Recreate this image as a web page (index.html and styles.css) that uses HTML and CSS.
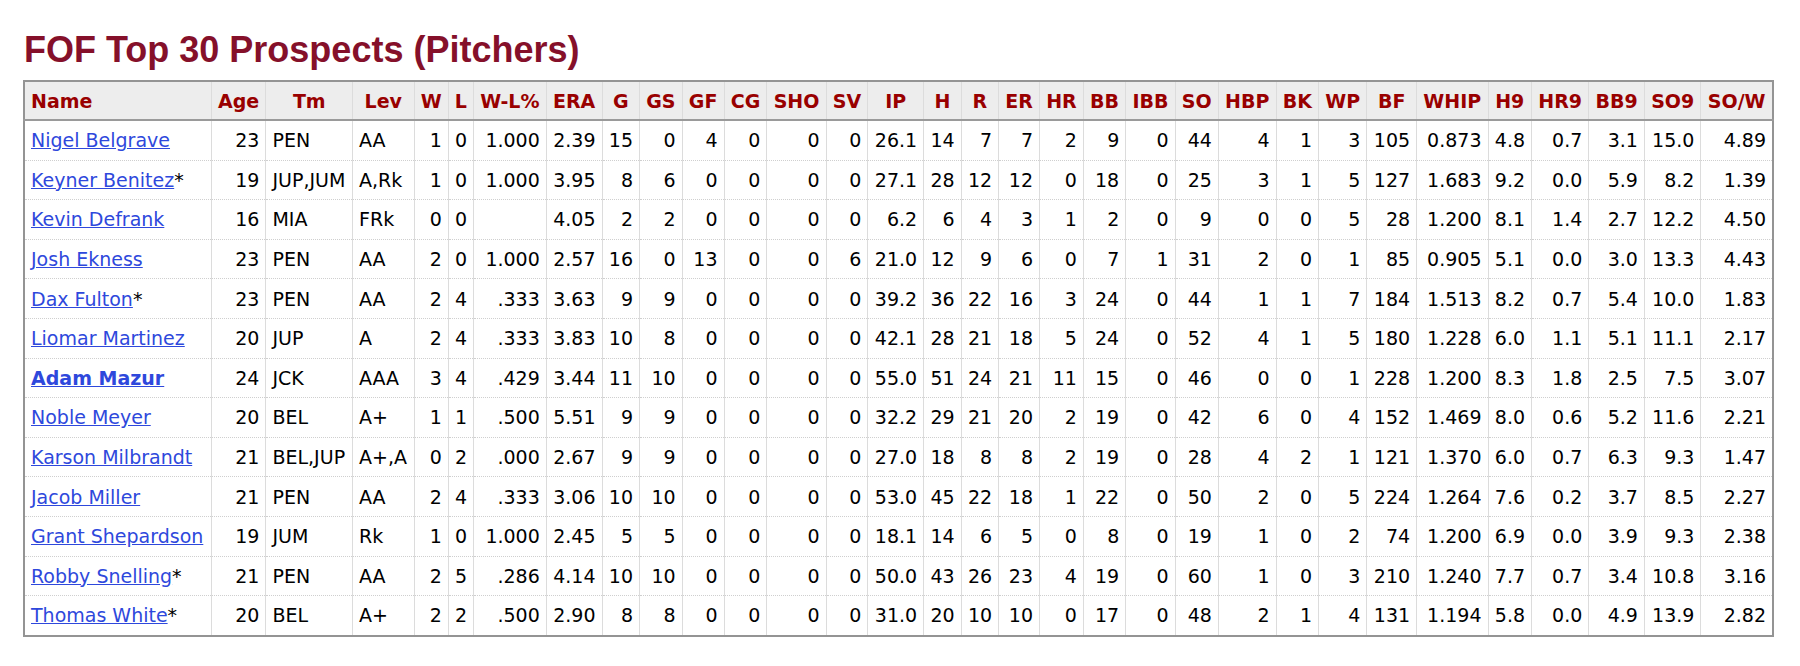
FILE: index.html
```html
<!DOCTYPE html>
<html>
<head>
<meta charset="utf-8">
<link rel="stylesheet" href="styles.css">
</head>
<body>
<h1 class="title">FOF Top 30 Prospects (Pitchers)</h1>
<table class="stats">
<thead>
<tr>
<th class="name">Name</th><th>Age</th><th>Tm</th><th>Lev</th><th>W</th><th>L</th><th>W-L%</th><th>ERA</th><th>G</th><th>GS</th><th>GF</th><th>CG</th><th>SHO</th><th>SV</th><th>IP</th><th>H</th><th>R</th><th>ER</th><th>HR</th><th>BB</th><th>IBB</th><th>SO</th><th>HBP</th><th>BK</th><th>WP</th><th>BF</th><th>WHIP</th><th>H9</th><th>HR9</th><th>BB9</th><th>SO9</th><th>SO/W</th>
</tr>
</thead>
<tbody>
<tr><td class="name"><a href="#">Nigel Belgrave</a></td><td>23</td><td class="l">PEN</td><td class="l">AA</td><td>1</td><td>0</td><td>1.000</td><td>2.39</td><td>15</td><td>0</td><td>4</td><td>0</td><td>0</td><td>0</td><td>26.1</td><td>14</td><td>7</td><td>7</td><td>2</td><td>9</td><td>0</td><td>44</td><td>4</td><td>1</td><td>3</td><td>105</td><td>0.873</td><td>4.8</td><td>0.7</td><td>3.1</td><td>15.0</td><td>4.89</td></tr>
<tr><td class="name"><a href="#">Keyner Benitez</a>*</td><td>19</td><td class="l">JUP,JUM</td><td class="l">A,Rk</td><td>1</td><td>0</td><td>1.000</td><td>3.95</td><td>8</td><td>6</td><td>0</td><td>0</td><td>0</td><td>0</td><td>27.1</td><td>28</td><td>12</td><td>12</td><td>0</td><td>18</td><td>0</td><td>25</td><td>3</td><td>1</td><td>5</td><td>127</td><td>1.683</td><td>9.2</td><td>0.0</td><td>5.9</td><td>8.2</td><td>1.39</td></tr>
<tr><td class="name"><a href="#">Kevin Defrank</a></td><td>16</td><td class="l">MIA</td><td class="l">FRk</td><td>0</td><td>0</td><td></td><td>4.05</td><td>2</td><td>2</td><td>0</td><td>0</td><td>0</td><td>0</td><td>6.2</td><td>6</td><td>4</td><td>3</td><td>1</td><td>2</td><td>0</td><td>9</td><td>0</td><td>0</td><td>5</td><td>28</td><td>1.200</td><td>8.1</td><td>1.4</td><td>2.7</td><td>12.2</td><td>4.50</td></tr>
<tr><td class="name"><a href="#">Josh Ekness</a></td><td>23</td><td class="l">PEN</td><td class="l">AA</td><td>2</td><td>0</td><td>1.000</td><td>2.57</td><td>16</td><td>0</td><td>13</td><td>0</td><td>0</td><td>6</td><td>21.0</td><td>12</td><td>9</td><td>6</td><td>0</td><td>7</td><td>1</td><td>31</td><td>2</td><td>0</td><td>1</td><td>85</td><td>0.905</td><td>5.1</td><td>0.0</td><td>3.0</td><td>13.3</td><td>4.43</td></tr>
<tr><td class="name"><a href="#">Dax Fulton</a>*</td><td>23</td><td class="l">PEN</td><td class="l">AA</td><td>2</td><td>4</td><td>.333</td><td>3.63</td><td>9</td><td>9</td><td>0</td><td>0</td><td>0</td><td>0</td><td>39.2</td><td>36</td><td>22</td><td>16</td><td>3</td><td>24</td><td>0</td><td>44</td><td>1</td><td>1</td><td>7</td><td>184</td><td>1.513</td><td>8.2</td><td>0.7</td><td>5.4</td><td>10.0</td><td>1.83</td></tr>
<tr><td class="name"><a href="#">Liomar Martinez</a></td><td>20</td><td class="l">JUP</td><td class="l">A</td><td>2</td><td>4</td><td>.333</td><td>3.83</td><td>10</td><td>8</td><td>0</td><td>0</td><td>0</td><td>0</td><td>42.1</td><td>28</td><td>21</td><td>18</td><td>5</td><td>24</td><td>0</td><td>52</td><td>4</td><td>1</td><td>5</td><td>180</td><td>1.228</td><td>6.0</td><td>1.1</td><td>5.1</td><td>11.1</td><td>2.17</td></tr>
<tr><td class="name"><a href="#" class="strong">Adam Mazur</a></td><td>24</td><td class="l">JCK</td><td class="l">AAA</td><td>3</td><td>4</td><td>.429</td><td>3.44</td><td>11</td><td>10</td><td>0</td><td>0</td><td>0</td><td>0</td><td>55.0</td><td>51</td><td>24</td><td>21</td><td>11</td><td>15</td><td>0</td><td>46</td><td>0</td><td>0</td><td>1</td><td>228</td><td>1.200</td><td>8.3</td><td>1.8</td><td>2.5</td><td>7.5</td><td>3.07</td></tr>
<tr><td class="name"><a href="#">Noble Meyer</a></td><td>20</td><td class="l">BEL</td><td class="l">A+</td><td>1</td><td>1</td><td>.500</td><td>5.51</td><td>9</td><td>9</td><td>0</td><td>0</td><td>0</td><td>0</td><td>32.2</td><td>29</td><td>21</td><td>20</td><td>2</td><td>19</td><td>0</td><td>42</td><td>6</td><td>0</td><td>4</td><td>152</td><td>1.469</td><td>8.0</td><td>0.6</td><td>5.2</td><td>11.6</td><td>2.21</td></tr>
<tr><td class="name"><a href="#">Karson Milbrandt</a></td><td>21</td><td class="l">BEL,JUP</td><td class="l">A+,A</td><td>0</td><td>2</td><td>.000</td><td>2.67</td><td>9</td><td>9</td><td>0</td><td>0</td><td>0</td><td>0</td><td>27.0</td><td>18</td><td>8</td><td>8</td><td>2</td><td>19</td><td>0</td><td>28</td><td>4</td><td>2</td><td>1</td><td>121</td><td>1.370</td><td>6.0</td><td>0.7</td><td>6.3</td><td>9.3</td><td>1.47</td></tr>
<tr><td class="name"><a href="#">Jacob Miller</a></td><td>21</td><td class="l">PEN</td><td class="l">AA</td><td>2</td><td>4</td><td>.333</td><td>3.06</td><td>10</td><td>10</td><td>0</td><td>0</td><td>0</td><td>0</td><td>53.0</td><td>45</td><td>22</td><td>18</td><td>1</td><td>22</td><td>0</td><td>50</td><td>2</td><td>0</td><td>5</td><td>224</td><td>1.264</td><td>7.6</td><td>0.2</td><td>3.7</td><td>8.5</td><td>2.27</td></tr>
<tr><td class="name"><a href="#">Grant Shepardson</a></td><td>19</td><td class="l">JUM</td><td class="l">Rk</td><td>1</td><td>0</td><td>1.000</td><td>2.45</td><td>5</td><td>5</td><td>0</td><td>0</td><td>0</td><td>0</td><td>18.1</td><td>14</td><td>6</td><td>5</td><td>0</td><td>8</td><td>0</td><td>19</td><td>1</td><td>0</td><td>2</td><td>74</td><td>1.200</td><td>6.9</td><td>0.0</td><td>3.9</td><td>9.3</td><td>2.38</td></tr>
<tr><td class="name"><a href="#">Robby Snelling</a>*</td><td>21</td><td class="l">PEN</td><td class="l">AA</td><td>2</td><td>5</td><td>.286</td><td>4.14</td><td>10</td><td>10</td><td>0</td><td>0</td><td>0</td><td>0</td><td>50.0</td><td>43</td><td>26</td><td>23</td><td>4</td><td>19</td><td>0</td><td>60</td><td>1</td><td>0</td><td>3</td><td>210</td><td>1.240</td><td>7.7</td><td>0.7</td><td>3.4</td><td>10.8</td><td>3.16</td></tr>
<tr><td class="name"><a href="#">Thomas White</a>*</td><td>20</td><td class="l">BEL</td><td class="l">A+</td><td>2</td><td>2</td><td>.500</td><td>2.90</td><td>8</td><td>8</td><td>0</td><td>0</td><td>0</td><td>0</td><td>31.0</td><td>20</td><td>10</td><td>10</td><td>0</td><td>17</td><td>0</td><td>48</td><td>2</td><td>1</td><td>4</td><td>131</td><td>1.194</td><td>5.8</td><td>0.0</td><td>4.9</td><td>13.9</td><td>2.82</td></tr>
</tbody>
</table>
</body>
</html>
```

FILE: styles.css
```css
html, body {
  margin: 0;
  padding: 0;
  background: #fff;
}
body {
  padding: 0 23px;
  font-family: "DejaVu Sans", Verdana, sans-serif;
  color: #000;
}
.title {
  font-family: "Liberation Sans", Arial, sans-serif;
  font-size: 36px;
  font-weight: bold;
  color: #85102a;
  margin: 0;
  padding: 30px 0 10px 1px;
  line-height: 40px;
}
.stats {
  border-collapse: collapse;
  border: 2px solid #949494;
  font-size: 19px;
  width: 1751px;
}
.stats th, .stats td {
  padding: 0 6px;
  white-space: nowrap;
  border-left: 1px solid #dcdcdc;
  border-right: 1px solid #dcdcdc;
}
.stats th {
  background: #ededed;
  color: #990000;
  font-weight: bold;
  text-align: center;
  height: 37px;
  border-bottom: 2px solid #9a9a9a;
}
.stats td {
  text-align: right;
  height: 38.6px;
  border-top: 1px dotted #cfcfcf;
}
.stats tbody tr:first-child td {
  border-top: none;
}
.stats th.name, .stats td.name, .stats td.l {
  text-align: left;
}
.stats a {
  color: #2e48dc;
  text-decoration: underline;
}
.stats a.strong {
  font-weight: bold;
}
```
